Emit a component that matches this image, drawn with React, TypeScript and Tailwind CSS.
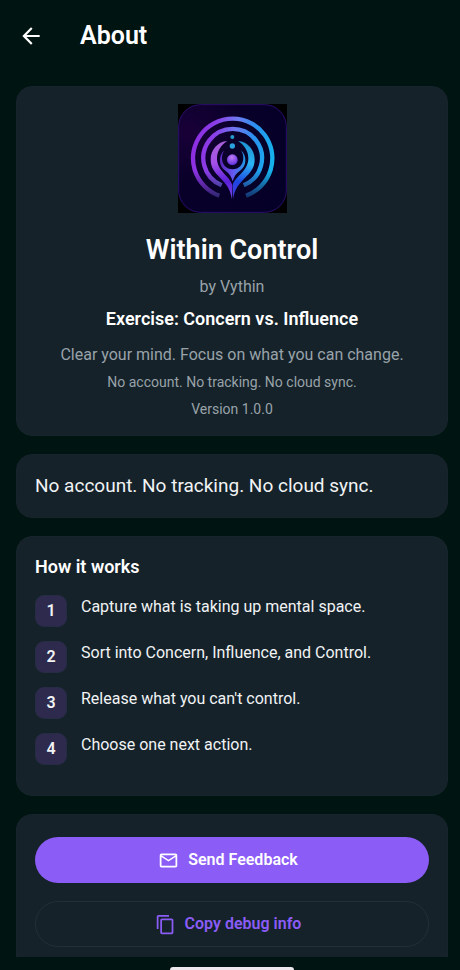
import { useId } from "react";

const steps = [
  "Capture what is taking up mental space.",
  "Sort into Concern, Influence, and Control.",
  "Release what you can't control.",
  "Choose one next action.",
];

function Logo() {
  const id = useId();
  const ring = `${id}-ring`;
  const left = `${id}-left`;
  const right = `${id}-right`;
  const cup = `${id}-cup`;
  const tile = `${id}-tile`;
  const head = `${id}-head`;
  const fade = `${id}-fade`;
  const mask = `${id}-mask`;
  return (
    <svg viewBox="0 0 327 327" className="size-[109px]" role="img" aria-label="Within Control logo">
      <defs>
        <linearGradient id={ring} gradientUnits="userSpaceOnUse" x1="38" y1="140" x2="288" y2="180">
          <stop offset="0" stopColor="#8d2ce0" />
          <stop offset="0.25" stopColor="#8a3fe8" />
          <stop offset="0.5" stopColor="#6c7cf0" />
          <stop offset="0.7" stopColor="#2c8ff0" />
          <stop offset="1" stopColor="#14b4ec" />
        </linearGradient>
        <linearGradient id={left} gradientUnits="userSpaceOnUse" x1="120" y1="115" x2="150" y2="285">
          <stop offset="0" stopColor="#a860d8" />
          <stop offset="0.35" stopColor="#a44fe8" />
          <stop offset="0.7" stopColor="#5a1fd8" />
          <stop offset="1" stopColor="#7a4ae8" />
        </linearGradient>
        <linearGradient id={right} gradientUnits="userSpaceOnUse" x1="215" y1="115" x2="170" y2="285">
          <stop offset="0" stopColor="#1c8fd0" />
          <stop offset="0.35" stopColor="#2bb4f4" />
          <stop offset="0.7" stopColor="#1d46e0" />
          <stop offset="1" stopColor="#4a3be0" />
        </linearGradient>
        <linearGradient id={cup} gradientUnits="userSpaceOnUse" x1="125" y1="175" x2="203" y2="175">
          <stop offset="0" stopColor="#5a24b8" />
          <stop offset="0.5" stopColor="#6656f0" />
          <stop offset="1" stopColor="#1d9be0" />
        </linearGradient>
        <radialGradient id={head} cx="0.45" cy="0.3" r="0.75">
          <stop offset="0" stopColor="#c07cf5" />
          <stop offset="1" stopColor="#5a2be0" />
        </radialGradient>
        <radialGradient id={tile} cx="0.1" cy="0.25" r="1">
          <stop offset="0" stopColor="#190038" />
          <stop offset="0.5" stopColor="#080028" />
          <stop offset="1" stopColor="#050028" />
        </radialGradient>
        <linearGradient id={fade} gradientUnits="userSpaceOnUse" x1="0" y1="200" x2="0" y2="282">
          <stop offset="0" stopColor="#fff" />
          <stop offset="1" stopColor="#555" />
        </linearGradient>
        <mask id={mask} maskUnits="userSpaceOnUse" x="0" y="0" width="327" height="327">
          <rect width="327" height="327" fill={`url(#${fade})`} />
        </mask>
      </defs>
      <rect width="327" height="327" fill="#000" />
      <rect x="2" y="2" width="323" height="323" rx="66" fill={`url(#${tile})`} stroke="#2c0f70" strokeWidth="3" />
      <g fill="none" stroke={`url(#${ring})`} mask={`url(#${mask})`}>
        <path strokeWidth="13" d="M124 275A119 119 0 1 1 204 275" />
        <path strokeWidth="13" d="M131 244A88 88 0 1 1 197 244" />
      </g>
      <path
        fill={`url(#${left})`}
        d="M148 111C118 113 98 138 98 167C98 218 154 222 162 286L163 244C156 216 119 204 117 166C116 142 130 122 148 111Z"
      />
      <path
        fill={`url(#${right})`}
        d="M180 111C210 113 230 138 230 167C230 218 174 222 165 286L164 244C171 216 209 204 211 166C212 142 198 122 180 111Z"
      />
      <path
        fill={`url(#${cup})`}
        d="M139 139C120 156 122 188 142 200C153 207 160 217 164 232C168 217 175 207 186 200C206 188 208 156 189 139C204 162 194 196 164 196C134 196 124 162 139 139Z"
      />
      <circle cx="163" cy="167" r="16" fill={`url(#${head})`} />
      <circle cx="163" cy="126" r="8" fill="#2aa0dc" />
      <circle cx="163" cy="99" r="6" fill="#249ccd" />
    </svg>
  );
}

const card = "rounded-2xl border border-[#17242c] bg-[#15222a] px-[18px]";

export default function App() {
  return (
    <div className="flex min-h-screen flex-col bg-[#001412] font-[Roboto,sans-serif] text-[#f1f3f4]">
      <header className="flex h-[72px] items-center gap-9 pl-[18px]">
        <button type="button" aria-label="Back" className="text-white">
          <svg viewBox="0 0 24 24" className="size-[26px]" fill="currentColor" aria-hidden="true">
            <path d="M20 11H7.83l5.59-5.59L12 4l-8 8 8 8 1.41-1.41L7.83 13H20v-2z" />
          </svg>
        </button>
        <h1 className="text-[25px] leading-8 font-semibold text-white">About</h1>
      </header>

      <main className="flex flex-1 flex-col gap-[18px] pt-[14px] pr-3 pl-4">
        <section className={`${card} flex flex-col items-center pt-[17px] pb-[14px] text-center`}>
          <Logo />
          <h2 className="mt-5 text-[27px] leading-[34px] font-semibold text-white">Within Control</h2>
          <p className="mt-[10px] text-base leading-5 text-[#99a2a9]">by Vythin</p>
          <p className="mt-[10px] text-lg leading-6 font-semibold text-white">Exercise: Concern vs. Influence</p>
          <p className="mt-3 text-base leading-6 text-[#99a2a9]">Clear your mind. Focus on what you can change.</p>
          <p className="mt-1 text-sm leading-[23px] text-[#99a2a9]">No account. No tracking. No cloud sync.</p>
          <p className="mt-1 text-sm leading-[23px] text-[#99a2a9]">Version 1.0.0</p>
        </section>

        <section className={`${card} py-[18px]`}>
          <p className="text-[19px] leading-[26px]">No account. No tracking. No cloud sync.</p>
        </section>

        <section className={`${card} pt-[18px] pb-[30px]`}>
          <h2 className="text-lg leading-6 font-semibold text-white">How it works</h2>
          <ol className="mt-4 flex flex-col gap-[14px]">
            {steps.map((step, index) => (
              <li key={step} className="flex gap-[14px]">
                <span className="flex size-8 shrink-0 items-center justify-center rounded-[9px] border border-[#272c45] bg-[#2d2a4d] text-base font-semibold">
                  {index + 1}
                </span>
                <span className="text-base leading-6">{step}</span>
              </li>
            ))}
          </ol>
        </section>

        <section className="flex flex-col gap-[18px] rounded-t-2xl border border-b-0 border-[#17242c] bg-[#15222a] px-[18px] pt-[22px] pb-[10px]">
          <button type="button" className="flex h-[46px] items-center justify-center gap-[9px] rounded-full bg-[#8b5cf6] pr-2 text-base font-semibold text-white">
            <svg viewBox="0 0 24 24" className="size-[21px]" fill="currentColor" aria-hidden="true">
              <path d="M22 6c0-1.100-.9-2-2-2H4c-1.100 0-2 .9-2 2v12c0 1.100.9 2 2 2h16c1.100 0 2-.9 2-2V6zm-2 0l-8 5-8-5h16zm0 12H4V8l8 5 8-5v10z" />
            </svg>
            Send Feedback
          </button>
          <button type="button" className="flex h-[46px] items-center justify-center gap-[9px] rounded-full border border-[#232f37] pr-2 text-base font-semibold text-[#8b5cf6]">
            <svg viewBox="0 0 24 24" className="size-[21px]" fill="currentColor" aria-hidden="true">
              <path d="M16 1H4c-1.100 0-2 .9-2 2v14h2V3h12V1zm3 4H8c-1.100 0-2 .9-2 2v14c0 1.100.9 2 2 2h11c1.100 0 2-.9 2-2V7c0-1.100-.9-2-2-2zm0 16H8V7h11v14z" />
            </svg>
            Copy debug info
          </button>
        </section>
      </main>

      <footer className="flex h-[13px] items-end justify-center pr-3 pl-4">
        <div className="h-[3px] w-[124px] rounded-t-sm bg-[#ece8ec]" />
      </footer>
    </div>
  );
}
